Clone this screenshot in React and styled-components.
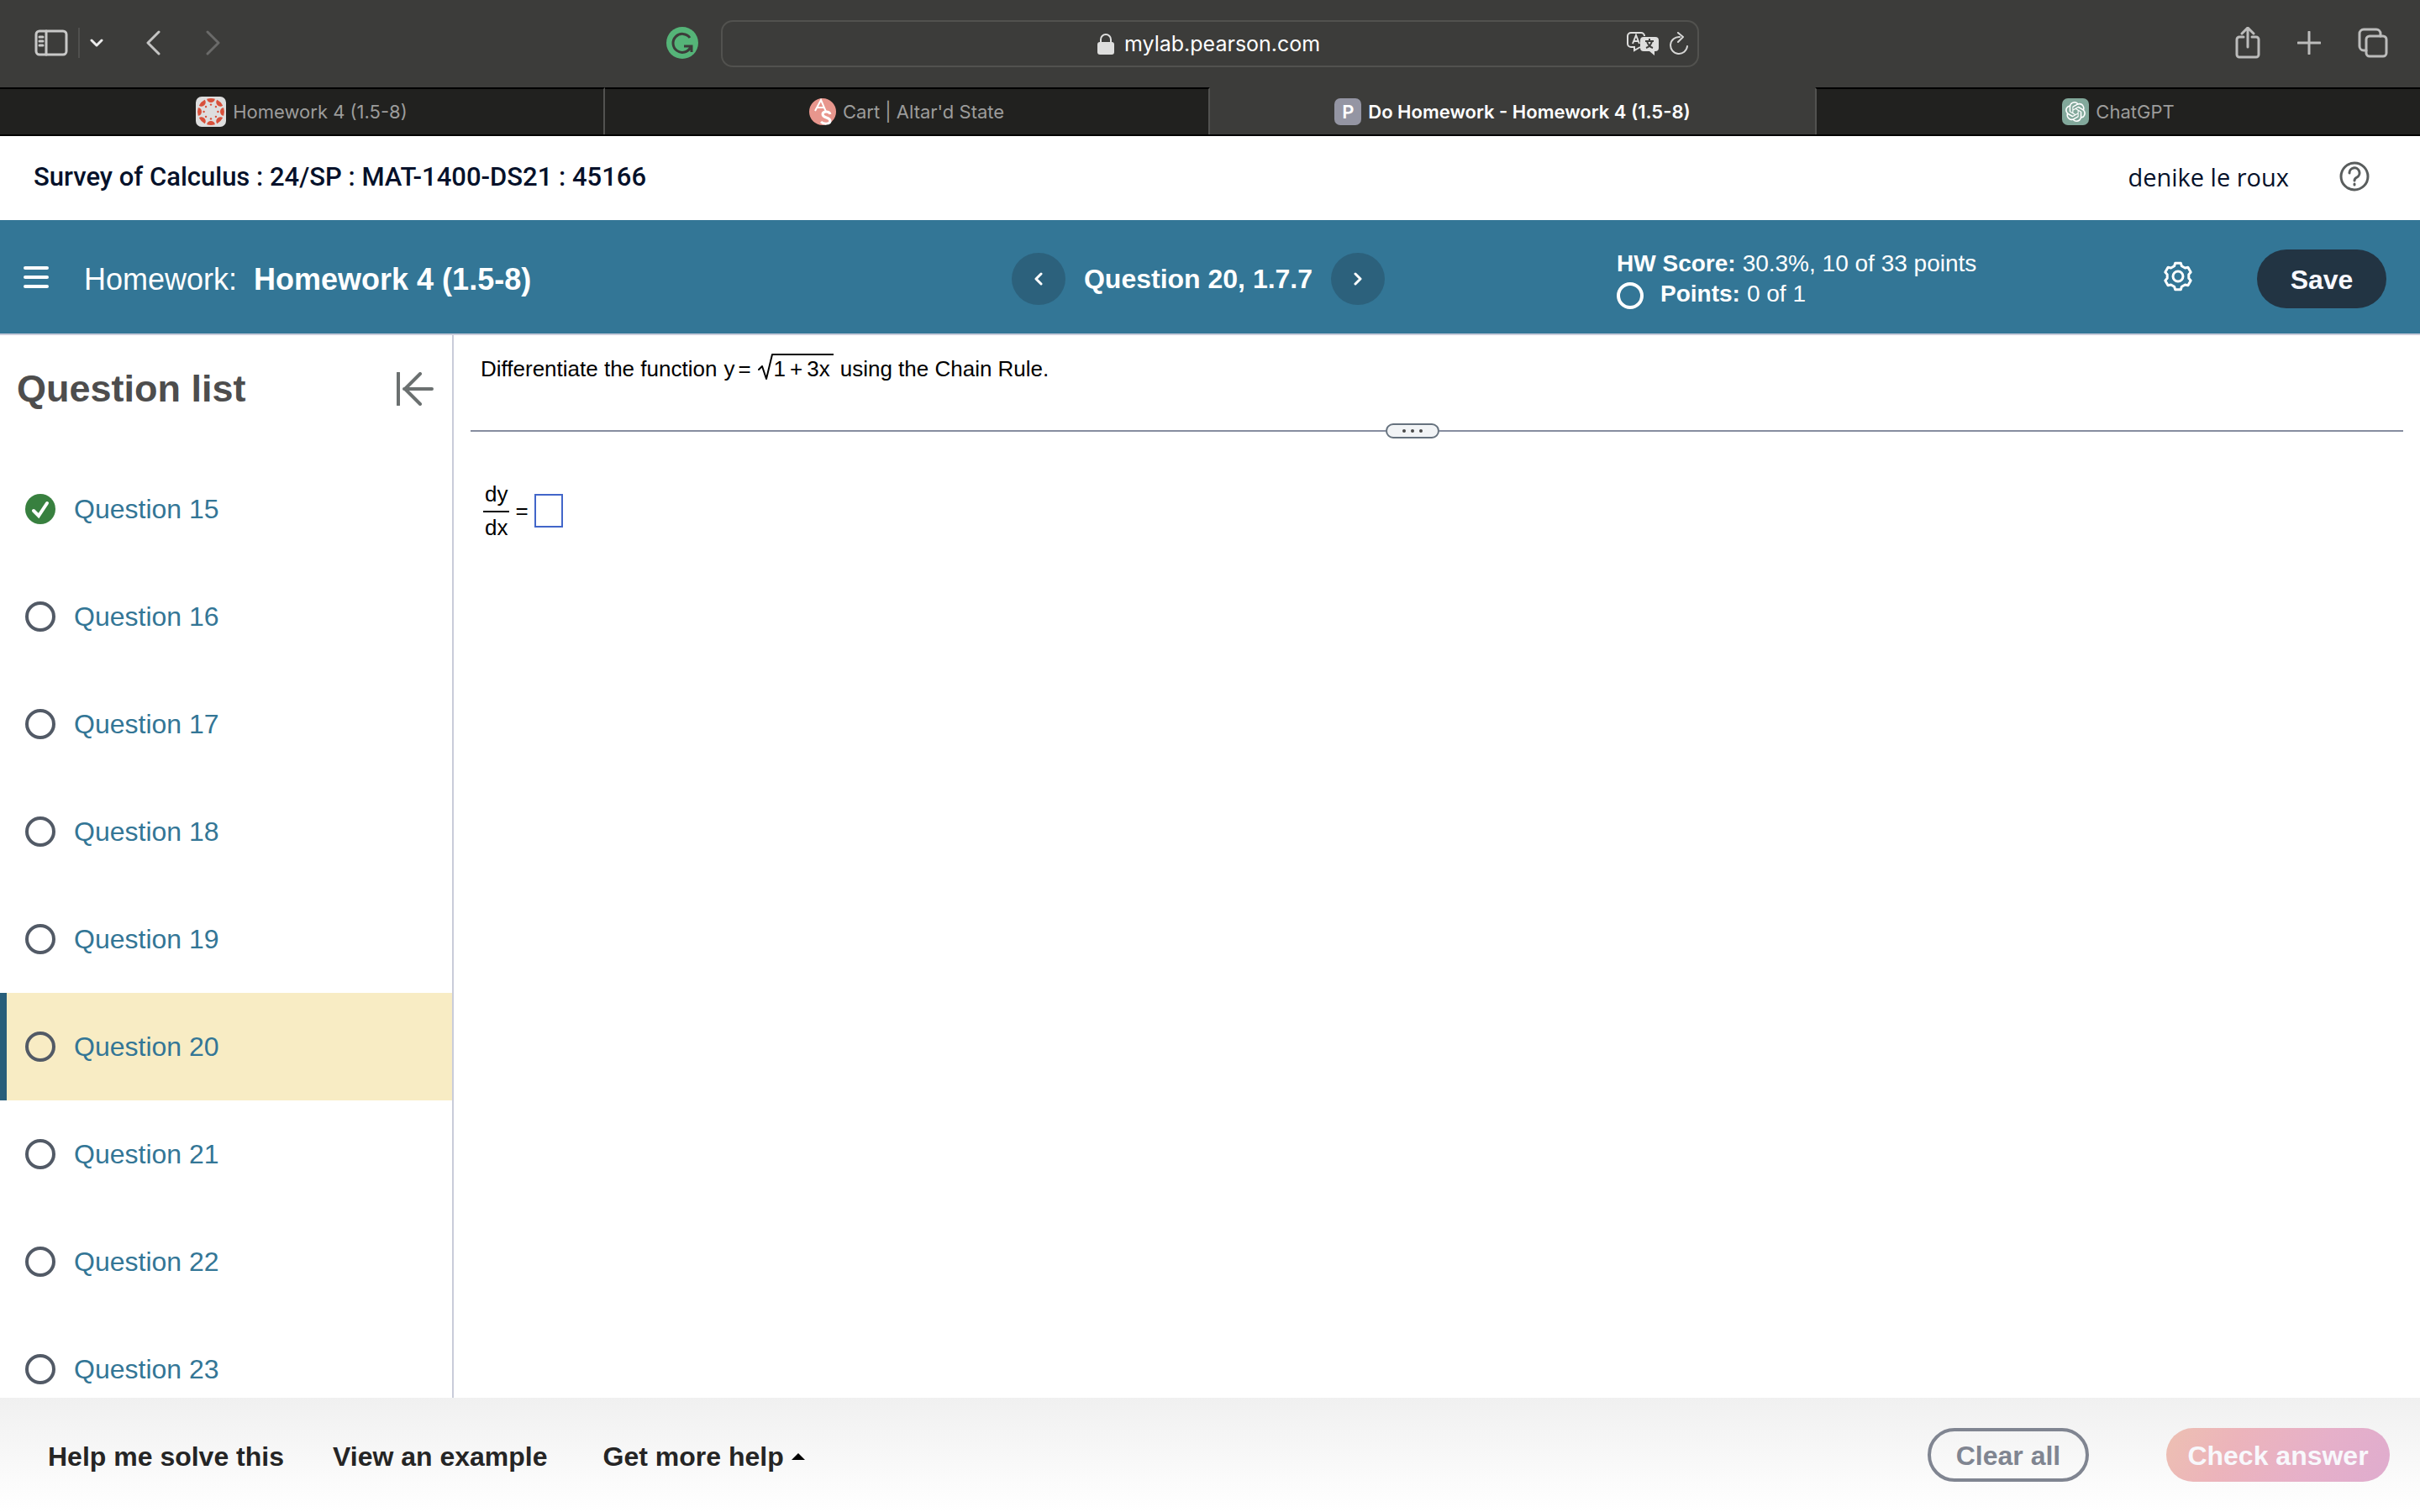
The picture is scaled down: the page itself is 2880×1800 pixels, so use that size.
import React from "react";
import styled, { createGlobalStyle } from "styled-components";
import { SiOpenai } from "react-icons/si";

const colors = {
  chrome: "#3c3c3a",
  tab: "#21211f",
  tabBorder: "#525250",
  blue: "#337696",
  darkBlue: "#2c617c",
  navy: "#223443",
  line: "#c9ccda",
  ink: "#05112a",
};

const questions = [15, 16, 17, 18, 19, 20, 21, 22, 23];

const App = () => (
  <Page>
    <GlobalStyle />
    <BrowserBar />
    <TabStrip />
    <CourseHeader>
      <CourseName>Survey of Calculus : 24/SP : MAT-1400-DS21 : 45166</CourseName>
      <UserName>denike le roux</UserName>
      <IconButton aria-label="Help">
        <HelpIcon />
      </IconButton>
    </CourseHeader>
    <AssignmentBar />
    <Body>
      <Sidebar />
      <Exercise />
    </Body>
    <Footer>
      <FooterLinks>
        <FooterLink>Help me solve this</FooterLink>
        <FooterLink>View an example</FooterLink>
        <FooterMenu>
          Get more help
          <Caret />
        </FooterMenu>
      </FooterLinks>
      <ClearButton>Clear all</ClearButton>
      <CheckButton>Check answer</CheckButton>
    </Footer>
  </Page>
);

export default App;

const BrowserBar = () => (
  <Toolbar>
    <ToolGroup>
      <IconButton aria-label="Sidebar">
        <SidebarIcon />
      </IconButton>
      <Separator />
      <IconButton aria-label="Tab groups">
        <Stroke width="16" height="10" $color="#ececec" $weight={3}>
          <path d="M2 2l6 6 6-6" />
        </Stroke>
      </IconButton>
      <HistoryButtons>
        <IconButton aria-label="Back">
          <Stroke width="18" height="30" $color="#c4c4c3" $weight={3}>
            <path d="M16 2L3 15l13 13" />
          </Stroke>
        </IconButton>
        <IconButton aria-label="Forward">
          <Stroke width="18" height="30" $color="#6a6a69" $weight={3}>
            <path d="M2 2l13 13L2 28" />
          </Stroke>
        </IconButton>
      </HistoryButtons>
      <Extension aria-label="Grammarly">
        <GrammarlyIcon />
      </Extension>
    </ToolGroup>
    <AddressBar>
      <LockIcon />
      <Address aria-label="Address" defaultValue="mylab.pearson.com" />
      <AddressActions>
        <IconButton aria-label="Translate">
          <TranslateIcon />
        </IconButton>
        <IconButton aria-label="Reload">
          <Stroke width="24" height="28" $color="#d6d6d5" $weight={2}>
            <path d="M22 17a10 10 0 1 1-9-11M11 1l6 5-6 6" />
          </Stroke>
        </IconButton>
      </AddressActions>
    </AddressBar>
    <WindowTools>
      <IconButton aria-label="Share">
        <Stroke width="30" height="38" $color="#bcbcbb" $weight={3}>
          <path d="M10 12H5a3 3 0 0 0-3 3v18a3 3 0 0 0 3 3h20a3 3 0 0 0 3-3V15a3 3 0 0 0-3-3h-5M15 24V2M8 8l7-7 7 7" />
        </Stroke>
      </IconButton>
      <IconButton aria-label="New tab">
        <Stroke width="28" height="28" $color="#bcbcbb" $weight={3}>
          <path d="M14 1v26M1 14h26" />
        </Stroke>
      </IconButton>
      <IconButton aria-label="Tab overview">
        <Stroke width="36" height="36" $color="#bcbcbb" $weight={3}>
          <rect x="10" y="10" width="24" height="24" rx="4" />
          <path d="M10 27H7a5 5 0 0 1-5-5V7a5 5 0 0 1 5-5h15a5 5 0 0 1 5 5v3" />
        </Stroke>
      </IconButton>
    </WindowTools>
  </Toolbar>
);

const TabStrip = () => (
  <Tabs>
    <Tab href="#canvas">
      <CanvasIcon />
      Homework 4 (1.5-8)
    </Tab>
    <Tab href="#cart">
      <AltardIcon />
      Cart | Altar'd State
    </Tab>
    <Tab href="#homework" $active>
      <Favicon $bg="#9495a3">P</Favicon>
      Do Homework - Homework 4 (1.5-8)
    </Tab>
    <Tab href="#chat">
      <Favicon $bg="#82a89b">
        <SiOpenai size={24} />
      </Favicon>
      ChatGPT
    </Tab>
  </Tabs>
);

const AssignmentBar = () => (
  <Bar>
    <BarTitle>
      <MenuButton aria-label="Menu">
        <Stroke width="30" height="28" $color="#fff" $weight={4}>
          <path d="M2 3h26M2 14h26M2 25h26" />
        </Stroke>
      </MenuButton>
      <Heading>
        Homework: <strong>Homework 4 (1.5-8)</strong>
      </Heading>
    </BarTitle>
    <Pager>
      <PagerButton aria-label="Previous question">
        <Stroke width="12" height="16" $color="#fff" $weight={3}>
          <path d="M9 2L3 8l6 6" />
        </Stroke>
      </PagerButton>
      <PagerLabel>Question 20, 1.7.7</PagerLabel>
      <PagerButton aria-label="Next question">
        <Stroke width="12" height="16" $color="#fff" $weight={3}>
          <path d="M3 2l6 6-6 6" />
        </Stroke>
      </PagerButton>
    </Pager>
    <BarRight>
      <Score>
        <ScoreLine>
          <b>HW Score:</b> 30.3%, 10 of 33 points
        </ScoreLine>
        <ScoreLine>
          <Ring width="32" height="32" $color="#fff" $weight={4}>
            <circle cx="16" cy="16" r="14" />
          </Ring>
          <b>Points:</b> 0 of 1
        </ScoreLine>
      </Score>
      <SettingsButton aria-label="Settings">
        <GearIcon />
      </SettingsButton>
      <SaveButton>Save</SaveButton>
    </BarRight>
  </Bar>
);

const Sidebar = () => (
  <Aside>
    <AsideHead>
      <AsideTitle>Question list</AsideTitle>
      <IconButton aria-label="Collapse question list">
        <Stroke width="44" height="40" $color="#6b7070" $weight={4}>
          <path d="M2 1v38M42 20H9M28 2L10 20l18 18" />
        </Stroke>
      </IconButton>
    </AsideHead>
    <List>
      {questions.map((n) => (
        <li key={n}>
          <QuestionLink href={`#q${n}`} $current={n === 20}>
            {n === 15 ? <DoneIcon /> : <OpenIcon />}
            Question {n}
          </QuestionLink>
        </li>
      ))}
    </List>
  </Aside>
);

const Exercise = () => (
  <Main>
    <Prompt>
      <span>Differentiate the function</span>
      <Equation>
        <span>y</span>
        <span>=</span>
      </Equation>
      <Root>
        <Stroke width="18" height="36" $color="#000" $weight={2}>
          <path d="M1 19l4-4 5 15 7-29h1" />
        </Stroke>
        <Radicand>
          <span>1</span>
          <span>+</span>
          <span>3x</span>
        </Radicand>
      </Root>
      <span>using the Chain Rule.</span>
    </Prompt>
    <Divider>
      <Rule $grow={19} />
      <Handle aria-label="Resize panels">
        <svg width="24" height="4" fill="#4a4a4a">
          <circle cx="2" cy="2" r="2" />
          <circle cx="12" cy="2" r="2" />
          <circle cx="22" cy="2" r="2" />
        </svg>
      </Handle>
      <Rule $grow={20} />
    </Divider>
    <Answer htmlFor="answer">
      <Fraction>
        <Numerator>dy</Numerator>
        <span>dx</span>
      </Fraction>
      <span>=</span>
      <AnswerBox id="answer" />
    </Answer>
  </Main>
);

const SidebarIcon = () => (
  <Stroke width="40" height="32" $color="#c8c8c7" $weight={3}>
    <rect x="2" y="2" width="36" height="28" rx="4" />
    <path d="M14 2v28M6 9h4M6 14h4M6 19h4" />
  </Stroke>
);

const GrammarlyIcon = () => (
  <svg width="38" height="38" viewBox="0 0 38 38">
    <circle cx="19" cy="19" r="19" fill="#55b478" />
    <path
      d="M28 13a11 11 0 1 0 1 11M21 23h9v7"
      fill="none"
      stroke="#3c3c3a"
      strokeWidth="3"
    />
  </svg>
);

const LockIcon = () => (
  <svg width="20" height="26" viewBox="0 0 20 26">
    <rect y="11" width="20" height="15" rx="3" fill="#dededd" />
    <path
      d="M4 12V8a6 6 0 0 1 12 0v4"
      fill="none"
      stroke="#dededd"
      strokeWidth="2"
    />
  </svg>
);

const TranslateIcon = () => (
  <svg width="38" height="28" viewBox="0 0 38 28">
    <path
      d="M16 18l-7 4v-4H5a4 4 0 0 1-4-4V5a4 4 0 0 1 4-4h12a4 4 0 0 1 4 4"
      fill="none"
      stroke="#dededd"
      strokeWidth="2"
    />
    <path
      d="M7 14l4-10 4 10M8 11h6"
      fill="none"
      stroke="#dededd"
      strokeWidth="2"
    />
    <path
      d="M20 6h14a4 4 0 0 1 4 4v9a4 4 0 0 1-4 4h-1v5l-6-5h-7a4 4 0 0 1-4-4v-9a4 4 0 0 1 4-4z"
      fill="#dededd"
    />
    <path
      d="M22 11h10M27 8v3M24 11c1 4 4 7 7 8M30 11c-1 4-4 7-7 8"
      fill="none"
      stroke="#3c3c3a"
      strokeWidth="2"
    />
  </svg>
);

const spokes = [0, 45, 90, 135, 180, 225, 270, 315];

const CanvasIcon = () => (
  <svg width="36" height="36" viewBox="0 0 36 36">
    <rect width="36" height="36" rx="7" fill="#dedede" />
    {spokes.map((deg) => (
      <g key={deg} transform={`rotate(${deg} 18 18)`} fill="#d8503a">
        <path d="M13.2 2.8a16 16 0 0 1 9.6 0a4.8 4.2 0 0 1-9.6 0z" />
        <circle cx="18" cy="9.6" r="1.2" />
      </g>
    ))}
  </svg>
);

const AltardIcon = () => (
  <svg width="32" height="32" viewBox="0 0 32 32">
    <circle cx="16" cy="16" r="16" fill="#e8968d" />
    <path
      d="M7 15l7-13 6 14M10 11h8"
      fill="none"
      stroke="#fff"
      strokeWidth="2"
    />
    <path
      d="M25 19c-1-4-9-4-9 0 0 5 9 3 9 8 0 4-8 4-11 1"
      fill="none"
      stroke="#fff"
      strokeWidth="3"
    />
  </svg>
);

const HelpIcon = () => (
  <Stroke width="36" height="36" $color="#595d5d" $weight={3}>
    <circle cx="18" cy="18" r="16" />
    <path d="M12 14a6 6 0 1 1 9 5c-2 1-3 2-3 4M18 27v1" />
  </Stroke>
);

const GearIcon = () => (
  <Stroke width="36" height="36" $color="#fff" $weight={3}>
    <path d="M14.7 2.3h6.6l1.1 3.5 4 2.2 3.5-.7 3.3 5.8-2.4 2.6v4.6l2.4 2.6-3.3 5.8-3.5-.7-4 2.2-1.1 3.5h-6.6l-1.1-3.5-4-2.2-3.5.7-3.3-5.8 2.4-2.6v-4.6l-2.4-2.6 3.3-5.8 3.5.7 4-2.2z" />
    <circle cx="18" cy="18" r="6" />
  </Stroke>
);

const DoneIcon = () => (
  <svg width="36" height="36" viewBox="0 0 36 36">
    <circle cx="18" cy="18" r="18" fill="#38803f" />
    <path
      d="M10 20l6 6L26 11"
      fill="none"
      stroke="#fff"
      strokeWidth="4"
      strokeLinecap="round"
    />
  </svg>
);

const OpenIcon = () => (
  <Stroke width="36" height="36" $color="#525a66" $weight={4}>
    <circle cx="18" cy="18" r="16" />
  </Stroke>
);

const Caret = () => (
  <svg width="16" height="8" viewBox="0 0 16 8">
    <path d="M0 8l8-8 8 8z" />
  </svg>
);

const GlobalStyle = createGlobalStyle`
  * {
    box-sizing: border-box;
  }

  body {
    margin: 0;
    background: #fff;
    font-family: "Liberation Sans", Arial, sans-serif;
  }

  button, input {
    font: inherit;
    color: inherit;
    border: 0;
    padding: 0;
    background: none;
  }

  a {
    text-decoration: none;
  }

  svg {
    display: block;
    flex: none;
  }
`;

const Stroke = styled.svg`
  fill: none;
  stroke: ${(p) => p.$color};
  stroke-width: ${(p) => p.$weight}px;
  stroke-linecap: round;
  stroke-linejoin: round;
`;

const Ring = styled(Stroke)`
  margin: 4px 20px 0 0;
`;

const Page = styled.div`
  display: flex;
  flex-direction: column;
  height: 100vh;
  overflow: hidden;
`;

const IconButton = styled.button`
  display: flex;
  align-items: center;
`;

const Toolbar = styled.header`
  display: grid;
  grid-template-columns: 1fr minmax(0, 1164px) 1fr;
  align-items: center;
  height: 104px;
  background: ${colors.chrome};
`;

const ToolGroup = styled.div`
  display: flex;
  align-items: center;
  gap: 12px;
  padding: 0 27px 2px 41px;
`;

const Separator = styled.span`
  width: 2px;
  height: 36px;
  background: #50504e;
`;

const HistoryButtons = styled.div`
  display: flex;
  gap: 54px;
  margin-left: 38px;
`;

const Extension = styled(IconButton)`
  margin-left: auto;
`;

const AddressBar = styled.div`
  position: relative;
  display: flex;
  align-items: center;
  justify-content: center;
  gap: 12px;
  height: 56px;
  border: 2px solid #52524f;
  border-radius: 14px;
`;

const Address = styled.input`
  width: 236px;
  color: #fff;
  font-family: Inter, sans-serif;
  font-size: 25px;
`;

const AddressActions = styled.div`
  position: absolute;
  right: 10px;
  display: flex;
  align-items: center;
  gap: 12px;
`;

const WindowTools = styled.div`
  display: flex;
  align-items: center;
  justify-content: flex-end;
  gap: 44px;
  padding: 0 38px 2px 0;
`;

const Tab = styled.a`
  display: flex;
  align-items: center;
  justify-content: center;
  gap: 8px;
  color: ${(p) => (p.$active ? "#fff" : "#9c9c9b")};
  background: ${(p) => (p.$active ? colors.chrome : colors.tab)};
  border-top: 2px solid ${(p) => (p.$active ? colors.chrome : "#000")};
  border-right: 2px solid ${colors.tabBorder};
  font-family: Inter, sans-serif;
  font-size: 22px;
  font-weight: ${(p) => (p.$active ? 600 : 400)};

  &:nth-last-child(-n + 2) {
    border-right: 0;
  }

  &:last-child {
    border-left: 2px solid ${colors.tabBorder};
  }
`;

const Tabs = styled.nav`
  display: grid;
  grid-template-columns: repeat(4, 1fr);
  height: 58px;
  border-bottom: 2px solid #000;
`;

const Favicon = styled.span`
  display: flex;
  align-items: center;
  justify-content: center;
  width: 32px;
  height: 32px;
  border-radius: 7px;
  color: #fff;
  background: ${(p) => p.$bg};
`;

const CourseHeader = styled.div`
  display: flex;
  align-items: center;
  height: 100px;
  padding: 0 60px 4px 40px;
  color: ${colors.ink};
`;

const CourseName = styled.div`
  font-family: Roboto, sans-serif;
  font-size: 31px;
  font-weight: 500;
`;

const UserName = styled.div`
  margin: 0 60px 0 auto;
  font-family: "Open Sans", sans-serif;
  font-size: 29px;
`;

const Bar = styled.div`
  display: grid;
  grid-template-columns: 1fr auto 1fr;
  align-items: center;
  height: 137px;
  padding: 4px 40px 0 12px;
  color: #fff;
  background: ${colors.blue};
  border-bottom: 2px solid ${colors.line};
`;

const BarTitle = styled.div`
  display: flex;
  align-items: center;
  gap: 26px;
`;

const MenuButton = styled(IconButton)`
  padding: 0 16px 4px;
`;

const Heading = styled.h1`
  margin: 0;
  padding-top: 2px;
  font-size: 36px;
  font-weight: 400;

  strong {
    margin-left: 10px;
  }
`;

const Pager = styled.div`
  display: flex;
  align-items: center;
  gap: 22px;
  font-size: 32px;
  font-weight: 700;
`;

const PagerLabel = styled.span`
  padding-top: 2px;
`;

const PagerButton = styled.button`
  display: flex;
  align-items: center;
  justify-content: center;
  width: 64px;
  height: 62px;
  border-radius: 50%;
  background: ${colors.darkBlue};
`;

const BarRight = styled.div`
  display: flex;
  align-items: center;
  padding-left: 276px;
`;

const Score = styled.div`
  font-size: 28px;
  line-height: 36px;
`;

const ScoreLine = styled.div`
  display: flex;
  gap: 8px;
  white-space: nowrap;

  svg {
    margin-right: 12px;
  }
`;

const SettingsButton = styled(IconButton)`
  margin: 0 76px 0 auto;
  padding-bottom: 6px;
`;

const SaveButton = styled.button`
  width: 154px;
  height: 70px;
  padding-top: 4px;
  border-radius: 35px;
  color: #f8f8ff;
  background: ${colors.navy};
  font-size: 32px;
  font-weight: 700;
`;

const Body = styled.div`
  display: flex;
  flex: 1;
  min-height: 0;
`;

const Aside = styled.aside`
  flex: none;
  width: 540px;
  overflow: hidden;
  border-right: 2px solid ${colors.line};
`;

const AsideHead = styled.div`
  display: flex;
  align-items: center;
  justify-content: space-between;
  height: 143px;
  padding: 0 22px 16px 20px;
`;

const AsideTitle = styled.h2`
  margin: 0;
  color: #4d4d4d;
  font-size: 45px;
`;

const List = styled.ul`
  margin: 0;
  padding: 0;
  list-style: none;
`;

const QuestionLink = styled.a`
  display: flex;
  align-items: center;
  gap: 22px;
  height: 128px;
  padding-left: 22px;
  border-left: 8px solid ${(p) => (p.$current ? "#285e7a" : "transparent")};
  color: ${colors.blue};
  background: ${(p) => (p.$current ? "#f8ecc4" : "none")};
  font-size: 32px;
`;

const Main = styled.main`
  flex: 1;
  padding: 20px;
  color: #000;
  font-size: 26px;
`;

const Prompt = styled.div`
  display: flex;
  align-items: center;
  gap: 8px;
  height: 40px;
  padding-left: 12px;
`;

const Equation = styled.span`
  display: flex;
  gap: 4px;
`;

const Root = styled.span`
  display: flex;
  align-items: center;
`;

const Radicand = styled.span`
  display: flex;
  align-items: center;
  gap: 5px;
  height: 36px;
  padding: 0 4px 2px 1px;
  border-top: 2px solid #000;
`;

const Divider = styled.div`
  display: flex;
  align-items: center;
  height: 18px;
  margin-top: 45px;
`;

const Rule = styled.span`
  flex: ${(p) => p.$grow};
  height: 2px;
  background: #868d9f;
`;

const Handle = styled.button`
  display: flex;
  align-items: center;
  justify-content: center;
  width: 64px;
  height: 18px;
  border: 2px solid #66727e;
  border-radius: 9px;
  background: #f2f4f6;
`;

const Answer = styled.label`
  display: flex;
  align-items: center;
  gap: 7px;
  margin-top: 48px;
  padding-left: 15px;
`;

const Fraction = styled.span`
  display: flex;
  flex-direction: column;
  align-items: center;
  line-height: 36px;
`;

const Numerator = styled.span`
  padding: 0 2px 2px;
  border-bottom: 2px solid #000;
`;

const AnswerBox = styled.input`
  width: 34px;
  height: 40px;
  border: 2px solid #4266c9;
`;

const Footer = styled.footer`
  display: flex;
  align-items: center;
  flex: none;
  height: 136px;
  padding: 0 36px 0 57px;
  background: linear-gradient(#f0f0f0, #fff);
  font-size: 32px;
  font-weight: 700;
`;

const FooterLinks = styled.div`
  display: flex;
  gap: 58px;
  margin-right: auto;
  padding-top: 4px;
  color: #252525;
`;

const FooterLink = styled.button`
  font-weight: 700;
`;

const FooterMenu = styled(FooterLink)`
  display: flex;
  align-items: center;
  gap: 9px;
  padding: 0 8px;
`;

const ClearButton = styled.button`
  width: 192px;
  height: 64px;
  margin-right: 92px;
  padding-top: 3px;
  border: 4px solid #808591;
  border-radius: 32px;
  color: #808591;
`;

const CheckButton = styled.button`
  width: 266px;
  height: 64px;
  padding-top: 3px;
  border-radius: 32px;
  color: #f8f8fc;
  background: linear-gradient(120deg, #edc0b2, #ecb4bb 30%, #e6b0c9 65%, #dfacce);
`;
